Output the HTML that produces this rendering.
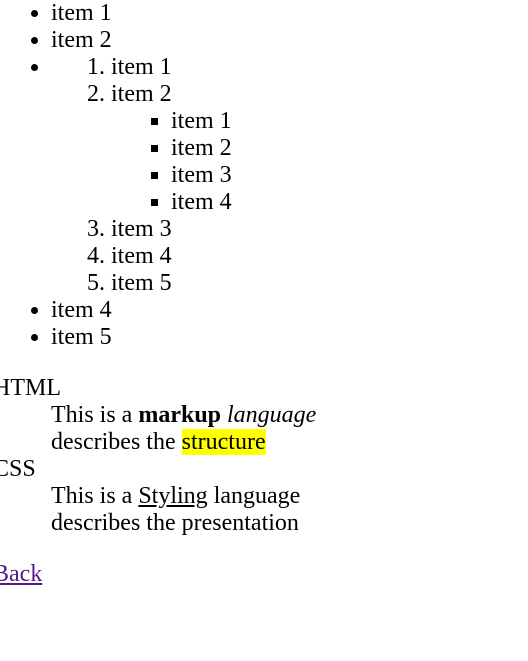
<!DOCTYPE html>
<html><head><meta charset="utf-8"><style>
html,body{margin:0;padding:0;background:#fff;}
body{font-family:"Liberation Serif",serif;font-size:24px;line-height:27px;color:#000;position:relative;left:-7px;width:535px;height:661px;overflow:hidden;}
ul,ol{margin:0;padding-left:58px;}
ul ul,ol ul,ul ol{padding-left:60px;}
ul ul,ol ul{list-style:square;}
dl{margin:24px 0;}
dt{margin:0;}
dd{margin:0 0 0 58px;}
mark{background:#ff0;color:#000;}
a{color:#551a8b;}
</style></head><body>
<ul>
<li>item 1</li>
<li>item 2</li>
<li><ol>
<li>item 1</li>
<li>item 2<ul>
<li>item 1</li>
<li>item 2</li>
<li>item 3</li>
<li>item 4</li>
</ul></li>
<li>item 3</li>
<li>item 4</li>
<li>item 5</li>
</ol></li>
<li>item 4</li>
<li>item 5</li>
</ul>
<dl>
<dt>HTML</dt>
<dd>This is a <b>markup</b> <i>language</i><br>describes the <mark>structure</mark></dd>
<dt>CSS</dt>
<dd>This is a <u>Styling</u> language<br>describes the presentation</dd>
</dl>
<a href="#">Back</a>
</body></html>
